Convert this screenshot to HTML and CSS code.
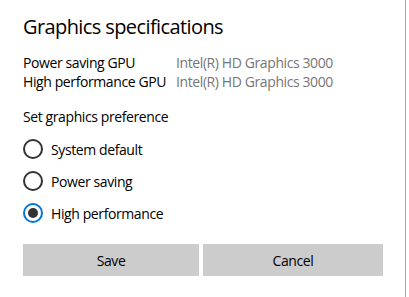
FILE: index.html
```html
<!DOCTYPE html>
<html>
<head>
<meta charset="utf-8">
<link rel="stylesheet" href="styles.css">
</head>
<body>
<div class="frame">
  <div class="panel">
    <h1 class="title">Graphics specifications</h1>
    <div class="specs">
      <div class="spec-label">Power saving GPU</div>
      <div class="spec-value">Intel(R) HD Graphics 3000</div>
      <div class="spec-label">High performance GPU</div>
      <div class="spec-value">Intel(R) HD Graphics 3000</div>
    </div>
    <div class="section-label">Set graphics preference</div>
    <div class="radios">
      <div class="radio-row"><span class="radio"></span><span class="radio-text">System default</span></div>
      <div class="radio-row"><span class="radio"></span><span class="radio-text">Power saving</span></div>
      <div class="radio-row"><span class="radio checked"></span><span class="radio-text">High performance</span></div>
    </div>
    <div class="buttons">
      <div class="btn btn-save">Save</div>
      <div class="btn btn-cancel">Cancel</div>
    </div>
  </div>
  <div class="edge"></div>
</div>
</body>
</html>
```
FILE: styles.css
```css
html, body {
  margin: 0;
  padding: 0;
  background: #ffffff;
}
body {
  font-family: "Open Sans", "Noto Sans", sans-serif;
  color: #000000;
  width: 409px;
  height: 297px;
  overflow: hidden;
  letter-spacing: -0.4px;
}
.frame {
  display: flex;
  height: 297px;
}
.panel {
  width: 360px;
  padding: 13px 0 0 23px;
}
.edge {
  width: 1px;
  height: 297px;
  margin-left: 22px;
  background: #a8a8a8;
}
.title {
  margin: 0;
  font-size: 20px;
  line-height: 28px;
  font-weight: 400;
  letter-spacing: -0.6px;
}
.specs {
  margin-top: 12px;
  display: grid;
  grid-template-columns: 153px auto;
  font-size: 14px;
  line-height: 19px;
}
.spec-value {
  color: #767676;
}
.section-label {
  margin-top: 16px;
  font-size: 14px;
  line-height: 19px;
}
.radios {
  margin-top: 13px;
  display: flex;
  flex-direction: column;
  gap: 12px;
}
.radio-row {
  display: flex;
  align-items: center;
  height: 20px;
  font-size: 14px;
  line-height: 19px;
}
.radio {
  box-sizing: border-box;
  width: 20px;
  height: 20px;
  border: 2px solid #333333;
  border-radius: 50%;
  display: flex;
  align-items: center;
  justify-content: center;
  margin-right: 8px;
}
.radio.checked {
  border-color: #0078d7;
}
.radio.checked::after {
  content: "";
  width: 10px;
  height: 10px;
  border-radius: 50%;
  background: #333333;
}
.buttons {
  margin-top: 21px;
  display: flex;
  gap: 4px;
}
.btn {
  height: 32px;
  background: #cccccc;
  display: flex;
  align-items: center;
  justify-content: center;
  font-size: 14px;
}
.btn-save {
  width: 176px;
}
.btn-cancel {
  width: 180px;
}
```
